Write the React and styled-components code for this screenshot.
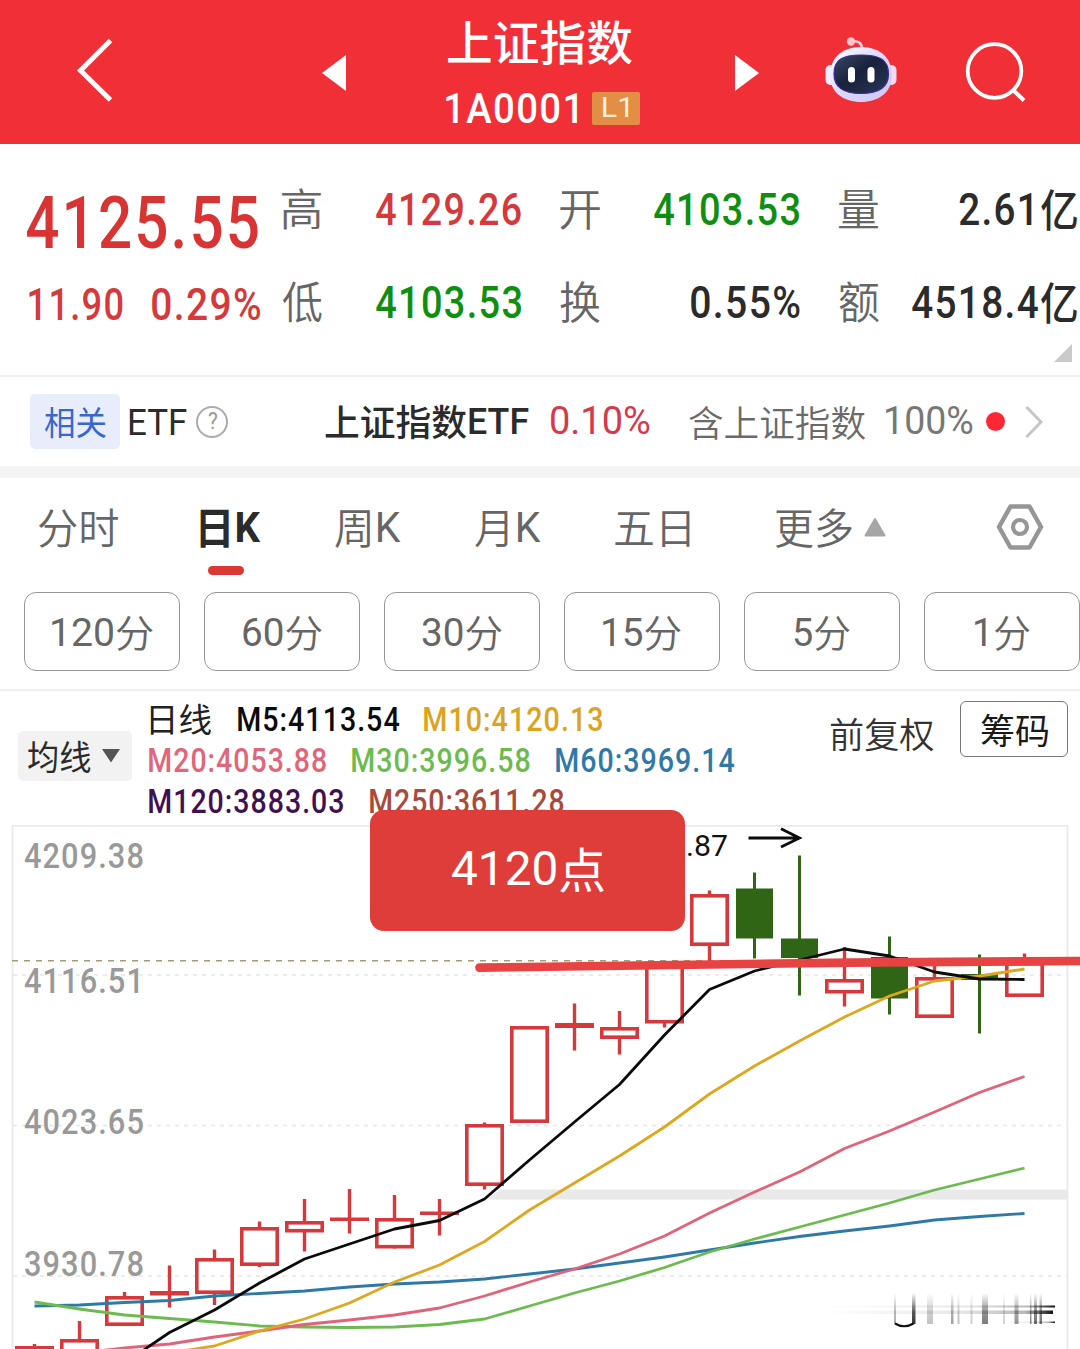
import React, { useLayoutEffect, useRef } from 'react';
import styled, { createGlobalStyle } from 'styled-components';

const Global = createGlobalStyle`
  * { box-sizing: border-box; }
  body { margin: 0; background: #fff; overflow: hidden; }
`;

const STACK = 'Roboto, "Noto Sans CJK SC", sans-serif';

/* ---------- text set to an exact measure ---------- */
const Measure = styled.span`
  display: block;
  flex: none;
  width: ${(p) => p.$w}px;
  height: ${(p) => p.$size}px;
  margin-left: ${(p) => p.$ml || 0}px;
  position: relative;
  top: ${(p) => (p.$dy || 0) + p.$size * 0.02}px;
`;
const Glyphs = styled.span`
  display: block;
  width: max-content;
  white-space: pre;
  transform-origin: 0 50%;
  font-family: ${STACK};
  font-size: ${(p) => p.$size}px;
  line-height: ${(p) => p.$size}px;
  font-weight: ${(p) => p.$weight || 400};
  letter-spacing: ${(p) => p.$track}px;
  color: ${(p) => p.$color};
`;
const Hanzi = styled.span`
  position: relative;
  top: 0.045em;
  font-weight: ${(p) => p.$weight};
`;

function Fit({ w, size, weight, hanzi, color, ml, dy, children }) {
  const ref = useRef(null);
  const track = weight >= 500 && /\d/.test(children) ? size * 0.035 : 0;
  useLayoutEffect(() => {
    const el = ref.current;
    const cs = getComputedStyle(el);
    const ctx = document.createElement('canvas').getContext('2d');
    ctx.font = `${cs.fontWeight} ${cs.fontSize} ${cs.fontFamily}`;
    ctx.letterSpacing = `${track}px`;
    const m = ctx.measureText(el.textContent);
    const left = m.actualBoundingBoxLeft;
    const ink = left + m.actualBoundingBoxRight;
    el.style.transform = `scaleX(${w / ink}) translateX(${left}px)`;
  }, [w, size, weight, track, children]);
  const parts = children.split(/([\u4e00-\u9fff]+)/).filter(Boolean);
  return (
    <Measure $w={w} $size={size} $ml={ml} $dy={dy}>
      <Glyphs ref={ref} $size={size} $weight={weight} $track={track} $color={color}>
        {parts.map((t, i) =>
          /[\u4e00-\u9fff]/.test(t) ? <Hanzi key={i} $weight={hanzi || weight || 400}>{t}</Hanzi> : t
        )}
      </Glyphs>
    </Measure>
  );
}

const Page = styled.div`
  width: 1080px;
  height: 1349px;
  overflow: hidden;
  display: flex;
  flex-direction: column;
  background: #fff;
`;

/* ---------- header ---------- */
const Header = styled.header`
  height: 144px;
  flex: none;
  background: #f12f37;
  display: flex;
  align-items: flex-start;
`;
const HeaderIcon = styled.svg`
  flex: none;
  display: block;
  overflow: visible;
  margin-left: ${(p) => p.$ml}px;
  margin-top: ${(p) => p.$mt}px;
`;
const TitleBlock = styled.div`
  width: 194px;
  margin-left: 100px;
  padding-top: 17px;
  display: flex;
  flex-direction: column;
  gap: 23px;
`;
const CodeLine = styled.div`
  display: flex;
  align-items: center;
  height: 42px;
`;
const Badge = styled.span`
  width: 48px;
  height: 33px;
  margin-left: 15px;
  border-radius: 2px;
  background: #e38e45;
  display: flex;
  align-items: center;
  justify-content: center;
`;

/* ---------- quote ---------- */
const Quote = styled.section`
  height: 233px;
  flex: none;
  padding: 18px 0 0 25.5px;
  display: flex;
  border-bottom: 2px solid #f1f1f1;
  position: relative;
`;
const PriceCol = styled.div`
  width: 256px;
  flex: none;
`;
const PriceRow = styled.div`
  height: ${(p) => p.$h}px;
  padding-left: ${(p) => p.$pl || 0}px;
  display: flex;
  align-items: center;
`;
const Stats = styled.div`
  display: grid;
  grid-template-columns: repeat(3, 239px);
  grid-auto-rows: 93px;
  column-gap: 39.5px;
`;
const Stat = styled.div`
  display: flex;
  align-items: center;
  justify-content: space-between;
`;
const Corner = styled.svg`
  position: absolute;
  left: 1054px;
  top: 200px;
`;

/* ---------- ETF row ---------- */
const EtfRow = styled.section`
  height: 89px;
  flex: none;
  padding: 0 0 0 30px;
  display: flex;
  align-items: center;
`;
const Tag = styled.span`
  width: 90px;
  height: 55px;
  border-radius: 5px;
  background: #e8edfb;
  display: flex;
  align-items: center;
  justify-content: center;
`;
const Help = styled.span`
  width: 32px;
  height: 32px;
  margin-left: 10px;
  border: 2px solid #aaa;
  border-radius: 50%;
  display: flex;
  align-items: center;
  justify-content: center;
`;
const LiveDot = styled.i`
  width: 19px;
  height: 19px;
  margin-left: 13px;
  border-radius: 50%;
  background: #fd2836;
`;
const Band = styled.div`
  height: 12px;
  flex: none;
  background: #f4f4f4;
`;

/* ---------- period tabs ---------- */
const Tabs = styled.nav`
  height: 114px;
  flex: none;
  padding: 0 0 16px 38px;
  display: flex;
  align-items: center;
`;
const Tab = styled.div`
  height: 98px;
  margin-left: ${(p) => p.$ml || 0}px;
  display: flex;
  align-items: center;
  position: relative;
`;
const Underline = styled.i`
  position: absolute;
  left: 8px;
  bottom: 1px;
  width: 36px;
  height: 9px;
  border-radius: 5px;
  background: #db3833;
`;
const TabIcon = styled.svg`
  flex: none;
  margin-left: ${(p) => p.$ml}px;
`;
const Minutes = styled.div`
  height: 99px;
  flex: none;
  padding: 0 0 0 24px;
  display: flex;
  gap: 24px;
  border-bottom: 2px solid #f0f0f0;
`;
const MinuteButton = styled.button`
  width: 156px;
  height: 79px;
  flex: none;
  padding: 0;
  border: 1px solid #969696;
  border-radius: 12px;
  background: #fff;
  display: flex;
  align-items: center;
  justify-content: center;
`;

/* ---------- indicators ---------- */
const Indicators = styled.section`
  height: 134px;
  flex: none;
  padding: 7px 0 0 18px;
  display: flex;
  align-items: flex-start;
`;
const MaSelect = styled.div`
  width: 114px;
  height: 50px;
  margin-top: 33px;
  padding-left: 10px;
  border-radius: 5px;
  background: #f2f2f2;
  display: flex;
  align-items: center;
`;
const Legend = styled.div`
  width: 652px;
  margin-left: 16px;
`;
const LegendLine = styled.div`
  height: 41px;
  display: flex;
  align-items: center;
`;
const Tools = styled.div`
  display: flex;
  align-items: flex-start;
  margin-left: 30px;
  padding-top: 3px;
`;
const ChipButton = styled.button`
  width: 108px;
  height: 56px;
  margin-left: 26px;
  padding: 0;
  border: 1.5px solid #777;
  border-radius: 6px;
  background: #fff;
  display: flex;
  align-items: center;
  justify-content: center;
`;
const Rights = styled.div`
  padding-top: 15px;
`;

/* ---------- chart ---------- */
const ChartArea = styled.section`
  height: 524px;
  flex: none;
  position: relative;
`;
const ChartSvg = styled.svg`
  display: block;
  text { font-family: ${STACK}; }
`;
const Callout = styled.div`
  position: absolute;
  left: 370px;
  top: -15.5px;
  width: 315px;
  height: 121px;
  border-radius: 14px;
  background: #de3d3a;
  display: flex;
  align-items: center;
  justify-content: center;
`;

const RED = '#d5393b';
const X0 = 34.5;
const STEP = 45;
const cx = (i) => X0 + STEP * i;

// [kind, wick top, body top, body bottom, wick bottom]
const CANDLES = [
  ['u', 1344, 1346, 1370, 1370],
  ['u', 1321, 1339, 1362, 1362],
  ['u', 1292, 1296, 1326, 1326],
  ['d', 1265.5, 1291, 1295.5, 1307.5],
  ['u', 1249.5, 1258, 1294, 1305],
  ['u', 1221.5, 1227, 1266, 1267],
  ['u', 1199, 1221, 1232.5, 1251.5],
  ['d', 1189, 1217.5, 1221, 1233.5],
  ['u', 1195, 1218, 1248.5, 1248.5],
  ['d', 1199, 1211.5, 1215, 1235.5],
  ['u', 1122.5, 1124, 1186, 1189.5],
  ['u', 1026, 1026, 1123, 1123],
  ['d', 1003.5, 1023, 1028, 1050.5],
  ['u', 1011, 1027, 1039, 1054.5],
  ['u', 964, 964, 1023.5, 1027.5],
  ['u', 890.5, 894, 946, 968],
  ['g', 872.5, 888.5, 938.5, 958.5],
  ['g', 855.5, 938.5, 958, 995.5],
  ['u', 947, 979, 993.5, 1006.5],
  ['g', 936.5, 957, 998.5, 1014.5],
  ['u', 965, 977, 1018, 1018],
  ['g', 954.5, 974, 980, 1033.5],
  ['u', 953.5, 962, 997, 997],
];

const LINES = [
  { c: '#2f79a8', from: 0, y: [1306, 1305, 1302.5, 1300.5, 1296, 1293.5, 1291, 1287, 1284, 1282, 1279, 1274, 1269, 1263, 1257, 1250, 1243, 1236.5, 1231, 1226, 1220, 1216.5, 1213.5] },
  { c: '#6cbb50', from: 0, y: [1302, 1309, 1315, 1318.5, 1322, 1326, 1327, 1327.5, 1327, 1324.5, 1319, 1306, 1293, 1281, 1267.5, 1252, 1239, 1227, 1215, 1203, 1190, 1179, 1168] },
  { c: '#e0637a', from: 1, y: [1353, 1348, 1344, 1337, 1331, 1324.5, 1320, 1315, 1308, 1296, 1282, 1269, 1254, 1236, 1213, 1192, 1172, 1148.5, 1131, 1112, 1092.5, 1076.5] },
  { c: '#dda71f', from: 3, y: [1353, 1346, 1331, 1319, 1303, 1282, 1265, 1241.5, 1210, 1183, 1156, 1127, 1094, 1066, 1041, 1017, 996, 981, 976, 969] },
  { c: '#0b0b0b', from: 2, y: [1363, 1332.5, 1310, 1283, 1259, 1244, 1229, 1220.5, 1199, 1160, 1122, 1084.5, 1035, 989.5, 971, 960, 949, 956, 972, 979, 979.5] },
];

function Candle({ d, x }) {
  const [kind, wt, bt, bb, wb] = d;
  if (kind === 'g') {
    return (
      <g fill="#2f6514">
        <rect x={x - 1.5} y={wt} width="3" height={wb - wt} />
        <rect x={x - 18.5} y={bt} width="37" height={bb - bt} />
      </g>
    );
  }
  if (kind === 'd') {
    return (
      <g fill={RED}>
        <rect x={x - 1.7} y={wt} width="3.4" height={wb - wt} />
        <rect x={x - 19.5} y={bt} width="39" height={bb - bt} />
      </g>
    );
  }
  return (
    <g fill={RED}>
      <rect x={x - 1.7} y={wt} width="3.4" height={bt - wt + 1} />
      <rect x={x - 1.7} y={bb - 1} width="3.4" height={wb - bb + 1} />
      <rect x={x - 17.7} y={bt + 1.8} width="35.4" height={bb - bt - 3.6} fill="none" stroke={RED} strokeWidth="3.6" />
    </g>
  );
}

// [x, width, opacity]
const STREAKS = [
  [894, 2, 0.35], [912, 3.5, 0.85], [927, 6, 0.25], [951, 2.5, 0.4], [957.5, 2, 0.25], [970.5, 2, 0.2],
  [982, 6, 0.55], [1003, 2, 0.18], [1014.5, 4, 0.45], [1030, 1.5, 0.5], [1034, 3, 0.6], [1039.5, 2.5, 0.6],
];

function Chart() {
  return (
    <ChartSvg width="1080" height="524" viewBox="0 825 1080 524">
      <defs>
        <linearGradient id="fadeDown" x1="0" y1="0" x2="0" y2="1">
          <stop offset="0" stopColor="#111" stopOpacity="0" />
          <stop offset="0.6" stopColor="#111" stopOpacity="0.8" />
          <stop offset="1" stopColor="#111" />
        </linearGradient>
        <linearGradient id="fadeRight" x1="0" y1="0" x2="1" y2="0">
          <stop offset="0" stopColor="#111" stopOpacity="0" />
          <stop offset="0.6" stopColor="#111" stopOpacity="0.1" />
          <stop offset="0.88" stopColor="#111" stopOpacity="0.3" />
          <stop offset="1" stopColor="#111" />
        </linearGradient>
      </defs>
      <path d="M12.5 1360V825.8H1067.5V1360" fill="none" stroke="#ebebeb" strokeWidth="2" />
      <g stroke="#e6e6e6" strokeWidth="1.5" strokeDasharray="4 5">
        <path d="M13 975H1067M13 1125.5H1067M13 1276H1067" />
      </g>
      <path d="M12 960.8H1067" stroke="#a39c78" strokeWidth="1.5" strokeDasharray="6 6" />
      <path d="M501 1189.5H1068V1199.5H486Z" fill="#e9e9e9" />
      <g fontSize="34.5" fontWeight="500" fill="#999" letterSpacing="1.2">
        <text x="24" y="868" textLength="121" lengthAdjust="spacingAndGlyphs">4209.38</text>
        <text x="24" y="993" textLength="121" lengthAdjust="spacingAndGlyphs">4116.51</text>
        <text x="24" y="1134" textLength="121" lengthAdjust="spacingAndGlyphs">4023.65</text>
        <text x="24" y="1276" textLength="121" lengthAdjust="spacingAndGlyphs">3930.78</text>
      </g>
      {CANDLES.map((d, i) => <Candle key={i} d={d} x={cx(i)} />)}
      {LINES.map((l) => (
        <polyline
          key={l.c}
          fill="none"
          stroke={l.c}
          strokeWidth="2.8"
          strokeLinejoin="round"
          points={l.y.map((y, i) => `${cx(i + l.from)},${y}`).join(' ')}
        />
      ))}
      <path d="M479.5 967.6L620 965.8L850 962.6L1084 960.9" fill="none" stroke="#e84343" strokeWidth="8.6" strokeLinecap="round" />
      <text x="686" y="855.5" fontSize="30" fill="#111" textLength="42" lengthAdjust="spacingAndGlyphs">.87</text>
      <path d="M748.5 838H799M781 828.7L799.5 838L781 847" fill="none" stroke="#0b0b0b" strokeWidth="2.8" />
      <g>
        {STREAKS.map(([x, w, o]) => (
          <rect key={x} x={x} y="1293" width={w} height="31" fill="url(#fadeDown)" opacity={o} />
        ))}
        <path d="M895 1323.5Q904 1329 913.5 1323.5" fill="none" stroke="#111" strokeWidth="2.2" />
        <rect x="830" y="1305.5" width="225" height="2" fill="url(#fadeRight)" />
        <rect x="825" y="1310.5" width="228" height="3.5" fill="url(#fadeRight)" />
        <rect x="1000" y="1321.5" width="55" height="1.5" fill="url(#fadeRight)" />
      </g>
    </ChartSvg>
  );
}

function Robot() {
  return (
    <HeaderIcon width="72" height="68" viewBox="0 0 72 68" $ml={66} $mt={36}>
      <defs>
        <linearGradient id="shell" x1="0" y1="0" x2="1" y2="1">
          <stop offset="0" stopColor="#ffffff" />
          <stop offset="0.5" stopColor="#dcd9fb" />
          <stop offset="1" stopColor="#cfc3f7" />
        </linearGradient>
        <linearGradient id="visor" x1="0" y1="0" x2="1" y2="1">
          <stop offset="0" stopColor="#3b4764" />
          <stop offset="0.45" stopColor="#18223c" />
          <stop offset="1" stopColor="#2b3656" />
        </linearGradient>
      </defs>
      <path d="M27 5.5C33 4.500 37 7 37 13" fill="none" stroke="#ffc9d6" strokeWidth="2.6" />
      <circle cx="26" cy="5.5" r="4.2" fill="#ffc4d0" />
      <rect x="0.5" y="29" width="12" height="20" rx="5" fill="#f6edff" />
      <rect x="59.5" y="29" width="12" height="20" rx="5" fill="#f3d9f2" />
      <path d="M36 11C56 11 67 23 67 39C67 57 53 66 36 66C19 66 5 57 5 39C5 23 16 11 36 11Z" fill="url(#shell)" />
      <path d="M36 19C55 19 63.5 24 63.5 38C63.5 51 54 57.5 36 57.5C18 57.5 9 51 9 38C9 24 17 19 36 19Z" fill="url(#visor)" stroke="#3a2f9a" strokeWidth="1.2" />
      <rect x="23" y="31" width="7" height="15.5" rx="3.5" fill="#fff" />
      <rect x="42.5" y="31" width="7" height="15.5" rx="3.5" fill="#fff" />
    </HeaderIcon>
  );
}

const STATS = [
  ['高', '4129.26', 145, '#d5393b'],
  ['开', '4103.53', 145, '#0f8f0f'],
  ['量', '2.61亿', 118.5, '#2b2b2b'],
  ['低', '4103.53', 145, '#0f8f0f'],
  ['换', '0.55%', 108.5, '#2b2b2b'],
  ['额', '4518.4亿', 165.5, '#2b2b2b'],
];

const LEGEND = [
  [['日线', 61, '#222', 2, 400, 33], ['M5:4113.54', 161, '#0b0b0b', 27], ['M10:4120.13', 178, '#dca322', 25]],
  [['M20:4053.88', 177.5, '#e0667b', 0.5], ['M30:3996.58', 178, '#6cbb50', 25.5], ['M60:3969.14', 178, '#2f79a8', 26]],
  [['M120:3883.03', 194, '#3f1152', 0.5], ['M250:3611.28', 194, '#a84a3c', 27]],
];

const MINUTES = [['120分', 101], ['60分', 79], ['30分', 80], ['15分', 78], ['5分', 56], ['1分', 55]];
const GREY = '#666';

export default function App() {
  return (
    <Page>
      <Global />
      <Header>
        <HeaderIcon width="34" height="64" viewBox="0 0 34 64" $ml={78} $mt={38}>
          <path d="M32.5 2.5L2.5 32.5L32.5 62" fill="none" stroke="#fff" strokeWidth="5" />
        </HeaderIcon>
        <HeaderIcon width="24" height="36" viewBox="0 0 24 36" $ml={209.5} $mt={54.5}>
          <path d="M24 0V36L0 18Z" fill="#fff" />
        </HeaderIcon>
        <TitleBlock>
          <Fit w={184} size={47} weight={500} color="#fff" ml={2.5}>上证指数</Fit>
          <CodeLine>
            <Fit w={131} size={42} weight={500} color="#fff">1A0001</Fit>
            <Badge><Fit w={25} size={28} color="#fff0dc" dy={-1}>L1</Fit></Badge>
          </CodeLine>
        </TitleBlock>
        <HeaderIcon width="24" height="36" viewBox="0 0 24 36" $ml={95.5} $mt={54.5}>
          <path d="M0 0V36L24 18Z" fill="#fff" />
        </HeaderIcon>
        <Robot />
        <HeaderIcon width="60" height="60" viewBox="0 0 60 60" $ml={69} $mt={42}>
          <circle cx="28.5" cy="29" r="26.8" fill="none" stroke="#fff" strokeWidth="3.8" />
          <path d="M47 48L58 58.5" stroke="#fff" strokeWidth="4" />
        </HeaderIcon>
      </Header>

      <Quote>
        <PriceCol>
          <PriceRow $h={120}><Fit w={232} size={73} weight={500} color="#d93434">4125.55</Fit></PriceRow>
          <PriceRow $h={43} $pl={3}>
            <Fit w={94} size={44.5} weight={500} color="#d5393b" dy={0.5}>11.90</Fit>
            <Fit w={108} size={44.5} weight={500} color="#d5393b" ml={29} dy={0.5}>0.29%</Fit>
          </PriceRow>
        </PriceCol>
        <Stats>
          {STATS.map(([k, v, w, c]) => (
            <Stat key={k}>
              <Fit w={40} size={44} hanzi={350} color="#666" dy={-0.5}>{k}</Fit>
              <Fit w={w} size={44.5} weight={500} color={c} dy={0.5}>{v}</Fit>
            </Stat>
          ))}
        </Stats>
        <Corner width="18" height="18" viewBox="0 0 18 18"><path d="M18 0V18H0Z" fill="#cacaca" /></Corner>
      </Quote>

      <EtfRow>
        <Tag><Fit w={62} size={33} color="#3a66cf">相关</Fit></Tag>
        <Fit w={57.5} size={36} color="#2b2b2b" ml={8.5} dy={0.5}>ETF</Fit>
        <Help><Fit w={9} size={23} color="#999">?</Fit></Help>
        <Fit w={204} size={36.5} weight={500} color="#2b2b2b" ml={97} dy={0.5}>上证指数ETF</Fit>
        <Fit w={99} size={38} color="#d5394b" ml={21.5} dy={-1}>0.10%</Fit>
        <Fit w={176} size={36} hanzi={350} color="#6a6a6a" ml={39.5} dy={1}>含上证指数</Fit>
        <Fit w={87} size={38} color="#777" ml={21} dy={-1}>100%</Fit>
        <LiveDot />
        <TabIcon width="18" height="34" viewBox="0 0 18 34" $ml={19.5}>
          <path d="M1.5 2L16 17L1.5 32" fill="none" stroke="#c6c6c6" strokeWidth="3" />
        </TabIcon>
      </EtfRow>
      <Band />

      <Tabs>
        <Tab><Fit w={80} size={41.5} hanzi={350} color={GREY}>分时</Fit></Tab>
        <Tab $ml={82}><Fit w={60.5} size={43} weight={700} color="#2b2b2b">日K</Fit><Underline /></Tab>
        <Tab $ml={74.5}><Fit w={66} size={42} hanzi={350} color={GREY}>周K</Fit></Tab>
        <Tab $ml={74}><Fit w={66} size={42} hanzi={350} color={GREY}>月K</Fit></Tab>
        <Tab $ml={74}><Fit w={75} size={41.5} hanzi={350} color={GREY}>五日</Fit></Tab>
        <Tab $ml={84.5}><Fit w={77.5} size={41.5} hanzi={350} color={GREY}>更多</Fit></Tab>
        <TabIcon width="22" height="20" viewBox="0 0 22 20" $ml={12}>
          <path d="M11 2L20.5 18.5H1.5Z" fill="#a6a6a6" stroke="#a6a6a6" strokeWidth="2" strokeLinejoin="round" />
        </TabIcon>
        <TabIcon width="48" height="48" viewBox="0 0 48 48" $ml={110}>
          <path d="M14.5 3.5H33.5L45 24L33.5 44.5H14.5L3 24Z" fill="none" stroke="#969696" strokeWidth="4.5" strokeLinejoin="round" />
          <circle cx="24" cy="24" r="7" fill="none" stroke="#969696" strokeWidth="4.2" />
        </TabIcon>
      </Tabs>

      <Minutes>
        {MINUTES.map(([t, w]) => (
          <MinuteButton key={t}><Fit w={w} size={38} hanzi={350} color={GREY} dy={0.5}>{t}</Fit></MinuteButton>
        ))}
      </Minutes>

      <Indicators>
        <MaSelect>
          <Fit w={62.5} size={34} color="#2b2b2b">均线</Fit>
          <TabIcon width="18" height="14" viewBox="0 0 18 14" $ml={11.5}>
            <path d="M0 0H18L9 13.5Z" fill="#555" />
          </TabIcon>
        </MaSelect>
        <Legend>
          {LEGEND.map((line, i) => (
            <LegendLine key={i}>
              {line.map(([t, w, c, ml, weight = 500, size = 33]) => (
                <Fit key={t} w={w} size={size} weight={weight} color={c} ml={ml}>{t}</Fit>
              ))}
            </LegendLine>
          ))}
        </Legend>
        <Tools>
          <Rights><Fit w={104} size={35.5} hanzi={350} color="#333" dy={1}>前复权</Fit></Rights>
          <ChipButton><Fit w={67} size={35} color="#1a1a1a" dy={1}>筹码</Fit></ChipButton>
        </Tools>
      </Indicators>

      <ChartArea>
        <Chart />
        <Callout><Fit w={152} size={48} color="#fff" dy={-1.5}>4120点</Fit></Callout>
      </ChartArea>
    </Page>
  );
}
